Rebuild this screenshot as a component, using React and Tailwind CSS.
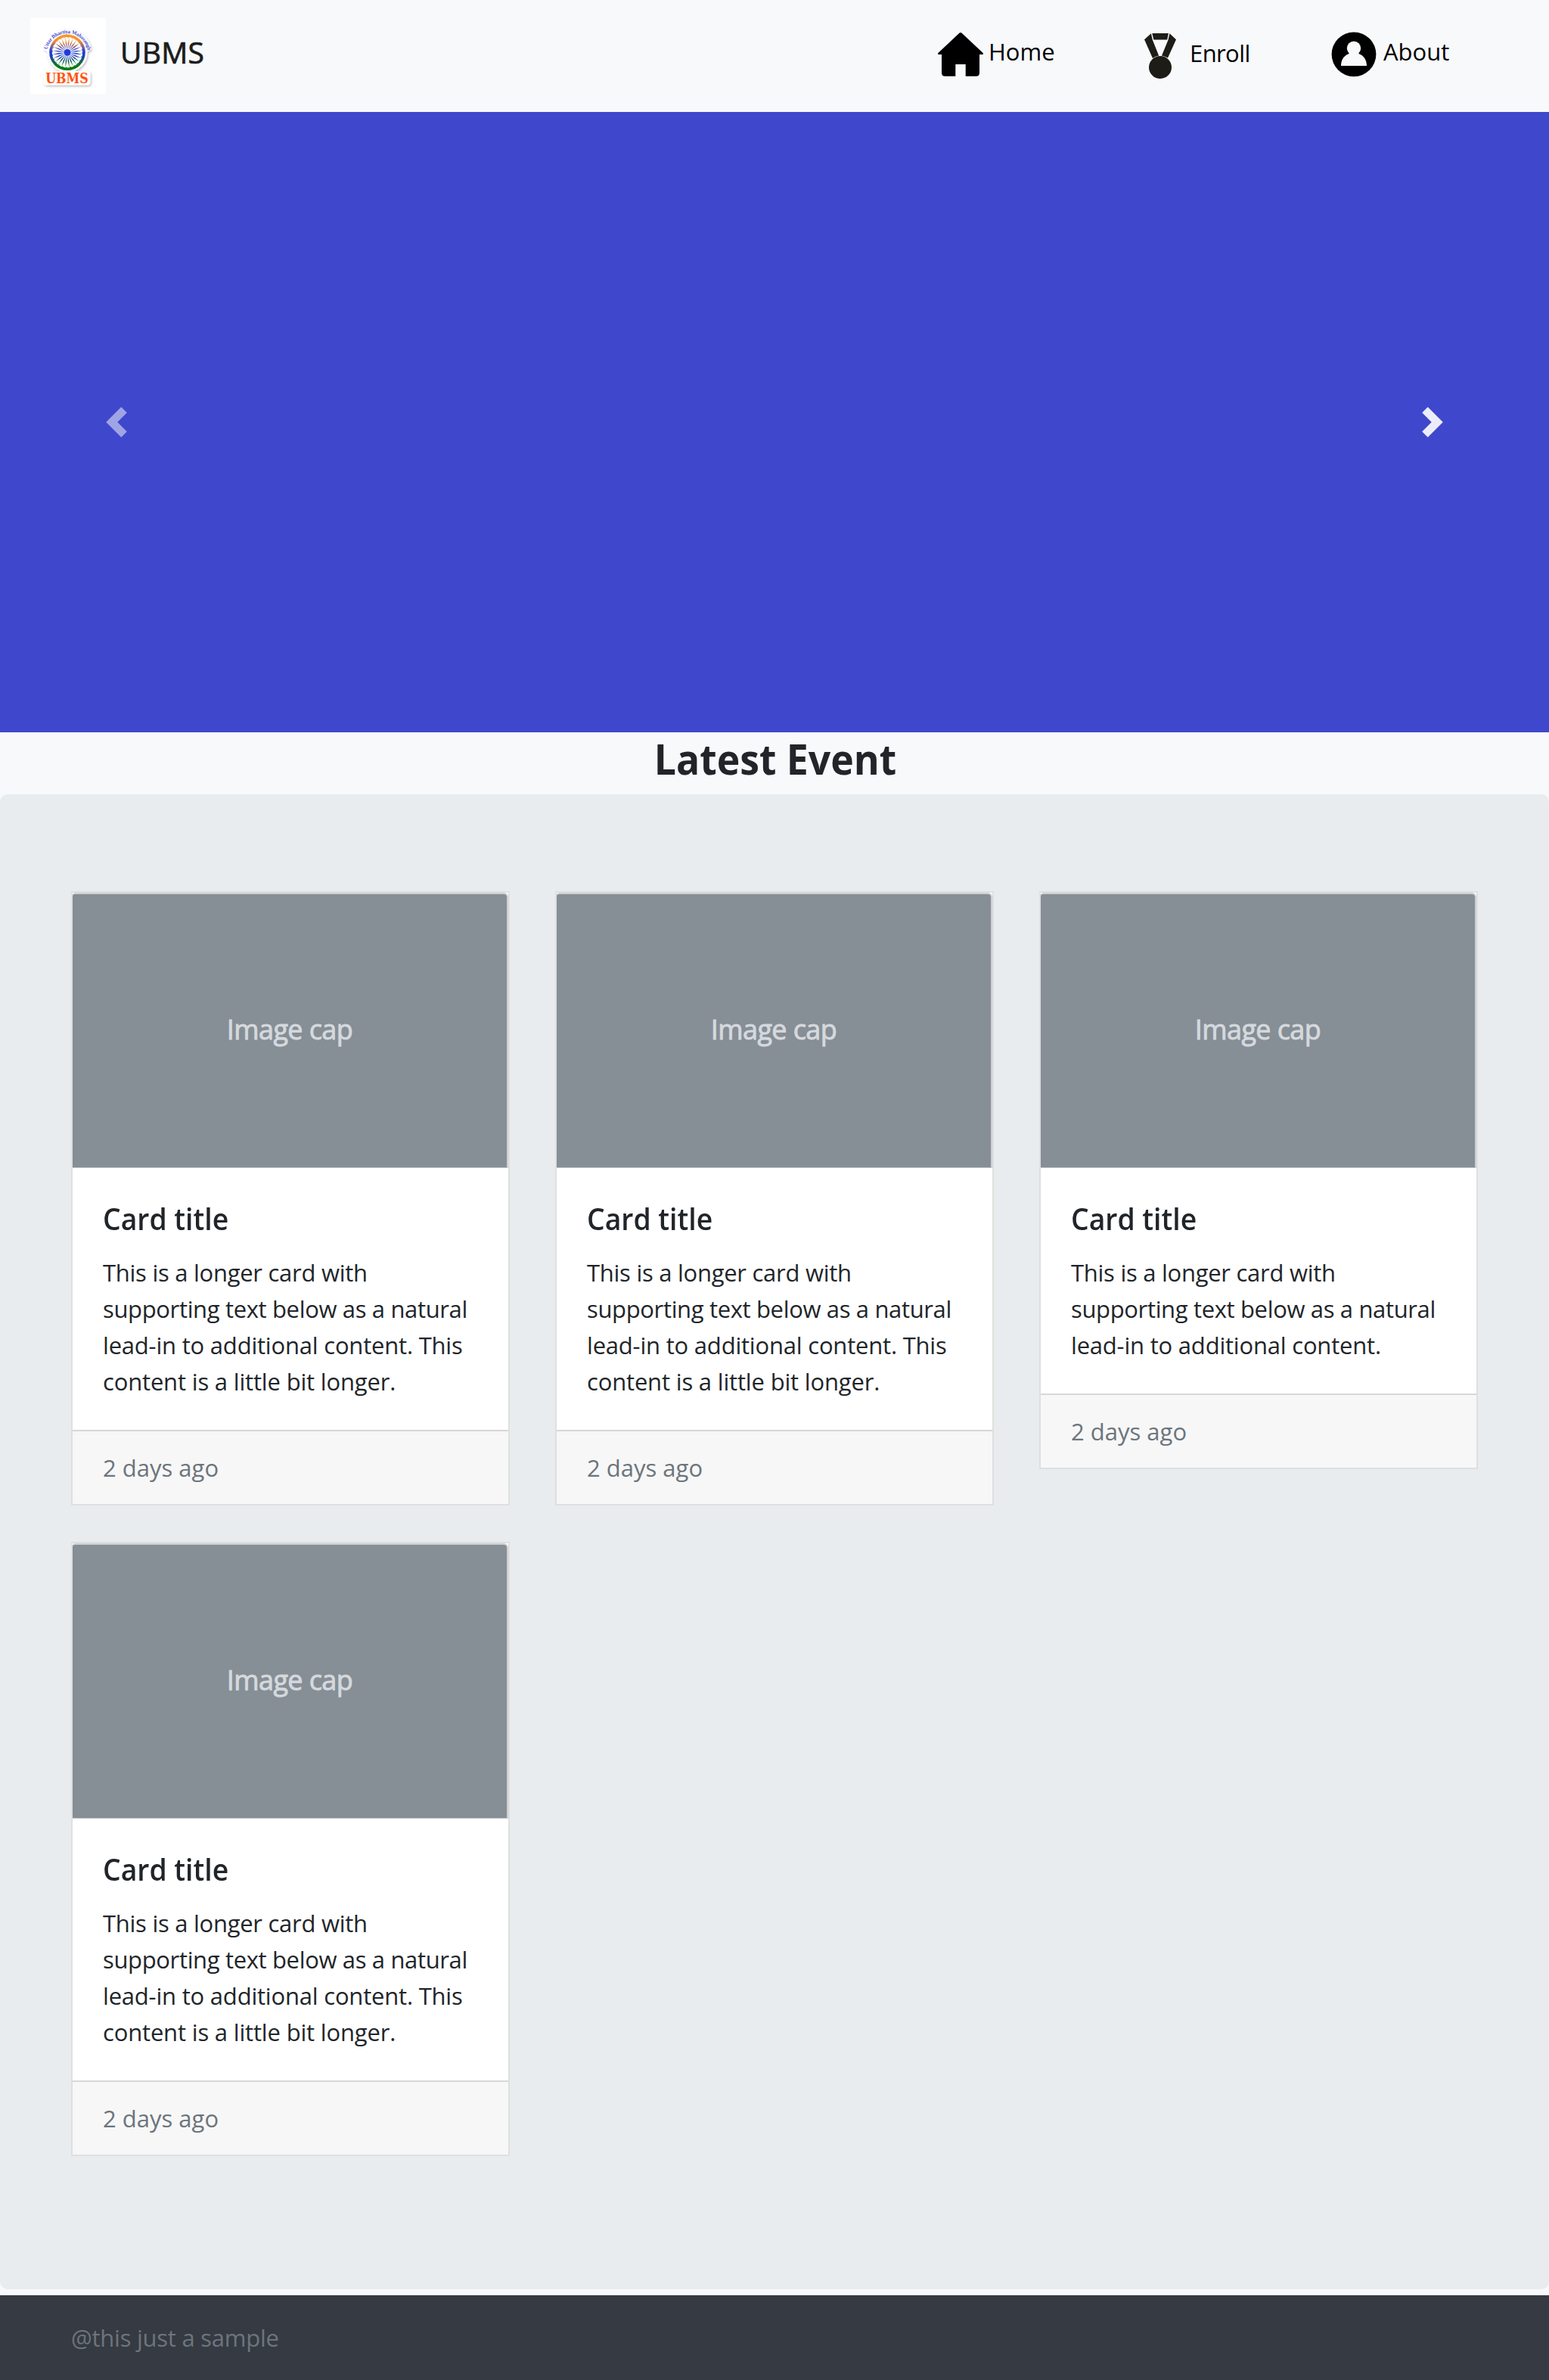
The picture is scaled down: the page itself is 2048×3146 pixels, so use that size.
const LONG = [
  { text: "This is a longer card with", track: "tracking-[-0.27px]" },
  { text: "supporting text below as a natural", track: "tracking-[-0.35px]" },
  { text: "lead-in to additional content. This", track: "tracking-[-0.2px]" },
  { text: "content is a little bit longer.", track: "tracking-[-0.17px]" },
];

const SHORT = [
  LONG[0],
  LONG[1],
  { text: "lead-in to additional content.", track: "tracking-[-0.2px]" },
];

const CARDS = [LONG, LONG, SHORT, LONG];

const SPOKES = Array.from({ length: 24 }, (_, i) => i * 15);

function Logo() {
  return (
    <svg viewBox="0 0 100 100" className="h-[100px] w-[100px] shrink-0 bg-white">
      <defs>
        <linearGradient id="flag" gradientUnits="userSpaceOnUse" x1="0" y1="21" x2="0" y2="69">
          <stop offset="0" stopColor="#ff9a1f" />
          <stop offset="0.2" stopColor="#f08a30" />
          <stop offset="0.48" stopColor="#1f3fd8" />
          <stop offset="0.6" stopColor="#1c3fc0" />
          <stop offset="0.85" stopColor="#0b7a1c" />
          <stop offset="1" stopColor="#0a7a12" />
        </linearGradient>
        <path id="arc" d="M22.4 41.5 A27.2 27.2 0 0 1 75.6 41.5" />
        <filter id="shade" x="-20%" y="-20%" width="140%" height="140%">
          <feDropShadow dx="1.2" dy="1.6" stdDeviation="1.6" floodColor="#000" floodOpacity="0.28" />
        </filter>
      </defs>
      <g filter="url(#shade)" fill="#fff">
        <circle cx="49" cy="45" r="26.5" />
        <path d="M17.5 41 A32 32 0 0 1 80.5 41 L76 44 H22Z" />
        <rect x="18" y="70" width="61.5" height="18.5" rx="4" />
      </g>
      <circle cx="49" cy="45.3" r="22" fill="none" stroke="url(#flag)" strokeWidth="3.6" />
      <g fill="url(#flag)">
        {SPOKES.map((a) => {
          const r = ((a + 7.5) * Math.PI) / 180;
          const s = 0.068;
          const p = (ang, d) => `${49 + d * Math.cos(ang)},${45.3 + d * Math.sin(ang)}`;
          return (
            <polygon key={a} points={`${p(r, 3)} ${p(r - s, 12)} ${p(r, 20)} ${p(r + s, 12)}`} />
          );
        })}
      </g>
      <circle cx="49" cy="45.3" r="19.8" fill="none" stroke="url(#flag)" strokeWidth="1" strokeDasharray="1.6 3.58" />
      <circle cx="49" cy="45.3" r="4.4" fill="#1d3bdc" />
      <text fontFamily="Liberation Serif, serif" fontSize="6.9" fontWeight="700" fill="#4a4ad0">
        <textPath href="#arc" textLength="75" lengthAdjust="spacing">Uttar Bhartiya Mahasangh</textPath>
      </text>
      <text x="20.2" y="85.8" fontFamily="DejaVu Serif, serif" fontSize="18" fontWeight="700" fill="#ff5310" textLength="56.6" lengthAdjust="spacingAndGlyphs">UBMS</text>
    </svg>
  );
}

function HomeIcon() {
  return (
    <svg viewBox="0 0 60 60" className="h-[60px] w-[60px] shrink-0">
      <path d="M28.6 1.6Q30 .4 31.4 1.6L59.6 28Q60.6 29.9 59 29.9H55V54.2Q55 58.7 50.5 58.7H36.7V43H23.3V58.7H9.5Q5 58.7 5 54.2V29.9H1Q-.6 29.9.4 28Z" />
    </svg>
  );
}

function MedalIcon() {
  return (
    <svg viewBox="0 0 60 62" className="h-[62px] w-[60px] shrink-0" fill="#1d1c17">
      <path d="M19.3.9H40.9L39.2 9.5H21.3Z" />
      <path d="M17.9 1.3L9 9.3L20 33.9Q23.5 31.2 28.1 30.4L19.8 9.8Z" />
      <path d="M42.4 1.3L51 9.3L40 33.6Q36.5 31.2 32 30.4L40.5 9.8Z" />
      <circle cx="30" cy="46" r="15" />
    </svg>
  );
}

function PersonIcon() {
  return (
    <svg viewBox="0 0 60 60" className="h-[60px] w-[60px] shrink-0">
      <circle cx="30" cy="29.8" r="29.4" />
      <g fill="#f8f9fb">
        <circle cx="30" cy="21.8" r="9.2" />
        <path d="M24.5 26H35.5Q35 28.6 37 29.2C43 31.5 47 37 47 45H13C13 37 17 31.5 23 29.2Q25 28.6 24.5 26Z" />
      </g>
    </svg>
  );
}

function Card({ lines }) {
  return (
    <article className="border-2 border-[#dfdfdf] bg-white">
      <div className="flex h-[364px] items-center justify-center rounded-tl-[4px] rounded-tr-[6px] border-t-2 border-r-2 border-b border-t-[#cdcfd1] border-r-[#cdcfd1] border-b-[#c3c7cb] bg-[#868e96] pb-1">
        <span className="text-[36px] tracking-[-0.6px] text-[#d5d9dd] [-webkit-text-stroke:0.9px_#d5d9dd]">Image cap</span>
      </div>
      <div className="px-10 pt-[43px] pb-10">
        <h5 className="mb-[23px] h-12 origin-left scale-x-[0.957] text-[39px] leading-[48px] font-semibold">Card title</h5>
        <p className="text-[31px] leading-[48px] whitespace-nowrap">
          {lines.map((l) => (
            <span key={l.text} className={`block ${l.track}`}>{l.text}</span>
          ))}
        </p>
      </div>
      <div className="border-t-2 border-[#d7d7d7] bg-[#f7f7f7] px-10 py-6 text-[31px] leading-[48px] text-[#6c757d]">
        2 days ago
      </div>
    </article>
  );
}

export default function App() {
  return (
    <div className="flex min-h-[3146px] w-full flex-col bg-[#f8f9fb] font-['Open_Sans',sans-serif] text-[#212529]">
      <header className="flex h-[148px] items-start pt-6 pr-[131px] pl-10">
        <Logo />
        <span className="mt-[15px] ml-[19px] text-[39px] leading-[60px] tracking-[0.3px] text-[#1b1c1d] [-webkit-text-stroke:0.7px_#1b1c1d]">UBMS</span>
        <nav className="ml-auto flex items-start text-[31px] leading-[48px] text-black">
          <a className="mt-[18px] flex w-[264px] gap-[7px]">
            <HomeIcon />
            <span className="mt-[2px]">Home</span>
          </a>
          <a className="mt-[19px] flex w-[256px] gap-[9px]">
            <MedalIcon />
            <span className="mt-[3px] tracking-[-0.6px]">Enroll</span>
          </a>
          <a className="mt-[18px] flex w-[157px] gap-[9px]">
            <PersonIcon />
            <span className="mt-[2px]">About</span>
          </a>
        </nav>
      </header>

      <section className="flex h-[820px] items-center justify-between bg-[#3f48cc]">
        <button className="flex w-[15%] justify-center opacity-50">
          <svg viewBox="0 0 8 8" className="h-10 w-10" fill="#fff">
            <path d="M5.25 0l-4 4 4 4 1.5-1.5-2.5-2.5 2.5-2.5-1.5-1.5z" />
          </svg>
        </button>
        <button className="flex w-[15%] justify-center opacity-90">
          <svg viewBox="0 0 8 8" className="h-10 w-10" fill="#fff">
            <path d="M2.75 0l-1.5 1.5 2.5 2.5-2.5 2.5 1.5 1.5 4-4-4-4z" />
          </svg>
        </button>
      </section>

      <h2 className="h-[82px] scale-x-[0.94] pl-[2px] text-center text-[55px] leading-[69px] font-bold">Latest Event</h2>

      <main className="grid h-[1976px] grid-cols-[580px_580px_580px] content-start items-start gap-x-[60px] gap-y-12 rounded-[10px] bg-[#e8ecef] px-[94px] pt-32">
        {CARDS.map((lines, i) => (
          <Card key={i} lines={lines} />
        ))}
      </main>

      <footer className="mt-2 h-[112px] bg-[#363a42] px-[94px] pt-8 text-[31px] leading-[48px] tracking-[-0.25px] text-[#6c757d]">
        @this just a sample
      </footer>
    </div>
  );
}
